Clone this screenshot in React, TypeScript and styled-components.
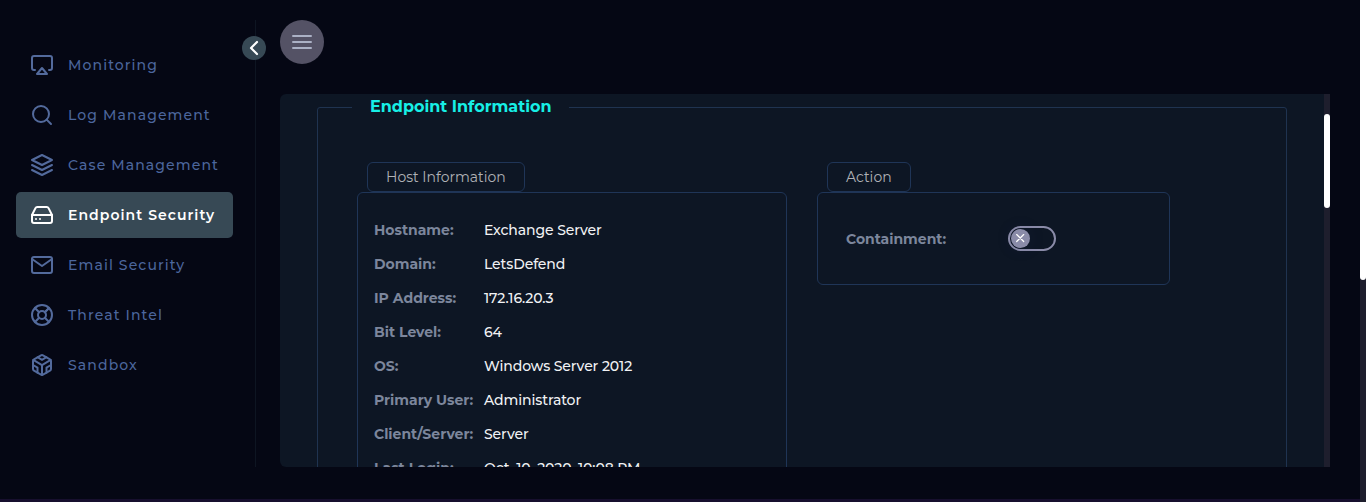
import React from "react";
import styled, { createGlobalStyle } from "styled-components";
import {
  FiAirplay,
  FiCodesandbox,
  FiHardDrive,
  FiLayers,
  FiLifeBuoy,
  FiMail,
  FiSearch,
} from "react-icons/fi";
import type { IconType } from "react-icons";

const GlobalStyle = createGlobalStyle`
  * { box-sizing: border-box; }
  body {
    margin: 0;
    background: #050714;
    font-family: Montserrat, Inter, sans-serif;
    font-size: 14px;
    overflow: hidden;
  }
`;

const Screen = styled.div`
  display: flex;
  height: 502px;
  background: #050714;
`;

const Page = styled.div`
  flex: 1;
  display: flex;
  flex-direction: column;
`;

const Content = styled.div`
  flex: 1;
  display: flex;
  padding: 20px 30px 32px 0;
`;

const BottomBar = styled.div`
  height: 3px;
  background: #170f2e;
`;

const ScrollTrack = styled.div<{ $offset?: number }>`
  flex: none;
  width: 6px;
  padding-top: ${(p) => p.$offset ?? 0}px;
  background: #1e1e2d;
`;

const ScrollThumb = styled.div<{ $height: number; $square?: boolean }>`
  height: ${(p) => p.$height}px;
  background: #fff;
  border-radius: ${(p) => (p.$square ? "0 0 3px 3px" : "3px")};
`;

const Sidebar = styled.aside`
  position: relative;
  width: 256px;
  padding: 22px 22px 0 16px;
  border-right: 1px solid #0e1522;
`;

const CollapseButton = styled.button`
  position: absolute;
  top: 16px;
  right: -11px;
  width: 24px;
  height: 24px;
  padding: 0;
  border: 0;
  border-radius: 50%;
  background: #374955;
  display: grid;
  place-items: center;
`;

const NavList = styled.nav`
  display: flex;
  flex-direction: column;
  gap: 4px;
`;

const NavItem = styled.a<{ $active?: boolean }>`
  display: flex;
  align-items: center;
  gap: 14px;
  height: 46px;
  padding-left: 14px;
  border-radius: 5px;
  letter-spacing: ${(p) => (p.$active ? "1.05px" : "1.12px")};
  white-space: nowrap;
  font-weight: ${(p) => (p.$active ? 600 : 500)};
  color: ${(p) => (p.$active ? "#fff" : "#4c669d")};
  background: ${(p) => (p.$active ? "#374955" : "transparent")};

  svg {
    flex: none;
    color: ${(p) => (p.$active ? "#fff" : "#536a9c")};
  }
`;

const Main = styled.main`
  flex: 1;
  display: flex;
  flex-direction: column;
  gap: 30px;
  padding-left: 24px;
`;

const MenuButton = styled.button`
  flex: none;
  width: 44px;
  height: 44px;
  padding: 0;
  border: 0;
  border-radius: 50%;
  background: #545265;
  display: flex;
  flex-direction: column;
  align-items: center;
  justify-content: center;
  gap: 4px;
`;

const MenuBar = styled.span`
  width: 20px;
  height: 2px;
  border-radius: 1px;
  background: #abb1c5;
`;

const Panel = styled.section`
  display: flex;
  height: 373px;
  overflow: hidden;
  border-radius: 6px 0 0 6px;
  background: #0d1624;
`;

const PanelBody = styled.div`
  flex: 1;
  padding: 1px 37px 0;
`;

const Group = styled.fieldset`
  height: 520px;
  margin: 0;
  padding: 43px 39px 0;
  border: 1px solid #1f3350;
  border-radius: 3px;
`;

const GroupTitle = styled.legend`
  width: 217px;
  margin-left: -5px;
  padding: 0 0 0 18px;
  font-size: 16px;
  line-height: 24px;
  font-weight: 700;
  color: #17efe6;
`;

const Cards = styled.div`
  display: flex;
  align-items: flex-start;
  gap: 30px;
`;

const CardColumn = styled.div<{ $width: number }>`
  width: ${(p) => p.$width}px;
`;

const CardTab = styled.h3`
  width: max-content;
  height: 30px;
  margin: 0 0 0 10px;
  padding: 0 18px;
  border: 1px solid #1f3557;
  border-radius: 6px;
  line-height: 28px;
  font-size: 14px;
  font-weight: 400;
  color: #b0b2b6;
`;

const Card = styled.div<{ $height: number }>`
  height: ${(p) => p.$height}px;
  border: 1px solid #1f3557;
  border-radius: 6px;
`;

const Details = styled.dl`
  display: grid;
  grid-template-columns: 110px 1fr;
  grid-auto-rows: 34px;
  align-items: center;
  margin: 0;
  padding: 20px 0 0 16px;
`;

const Term = styled.dt`
  font-weight: 700;
  color: #7c869c;
`;

const Value = styled.dd`
  margin: 0;
  font-weight: 500;
  letter-spacing: -0.1px;
  color: #f1f2f4;
`;

const ContainmentRow = styled.div`
  display: flex;
  align-items: center;
  height: 91px;
  padding-left: 28px;
`;

const ContainmentLabel = styled.span`
  width: 162px;
  font-weight: 700;
  color: #7c869c;
`;

const Toggle = styled.button`
  display: flex;
  align-items: center;
  width: 48px;
  height: 25px;
  padding: 0 0 0 1px;
  border: 2px solid #8a8ba8;
  border-radius: 13px;
  background: transparent;
`;

const Knob = styled.span`
  display: grid;
  place-items: center;
  width: 19px;
  height: 19px;
  border-radius: 50%;
  background: #8a8ba8;
  box-shadow: 0 0 18px rgba(60, 50, 130, 0.12);
`;

const navItems: { label: string; icon: IconType; active?: boolean }[] = [
  { label: "Monitoring", icon: FiAirplay },
  { label: "Log Management", icon: FiSearch },
  { label: "Case Management", icon: FiLayers },
  { label: "Endpoint Security", icon: FiHardDrive, active: true },
  { label: "Email Security", icon: FiMail },
  { label: "Threat Intel", icon: FiLifeBuoy },
  { label: "Sandbox", icon: FiCodesandbox },
];

const hostDetails: [string, string][] = [
  ["Hostname:", "Exchange Server"],
  ["Domain:", "LetsDefend"],
  ["IP Address:", "172.16.20.3"],
  ["Bit Level:", "64"],
  ["OS:", "Windows Server 2012"],
  ["Primary User:", "Administrator"],
  ["Client/Server:", "Server"],
  ["Last Login:", "Oct, 10, 2020, 10:08 PM"],
];

export default function App() {
  return (
    <Screen>
      <GlobalStyle />
      <Page>
        <Content>
          <Sidebar>
            <CollapseButton aria-label="Collapse sidebar">
              <svg width="24" height="24" viewBox="0 0 24 24" fill="none">
                <path d="M15 6L9 12L15 18" stroke="#fff" strokeWidth="2.2" strokeLinecap="round" strokeLinejoin="round" />
              </svg>
            </CollapseButton>
            <NavList>
              {navItems.map(({ label, icon: Icon, active }) => (
                <NavItem key={label} $active={active}>
                  <Icon size={24} />
                  {label}
                </NavItem>
              ))}
            </NavList>
          </Sidebar>
          <Main>
            <MenuButton aria-label="Menu">
              <MenuBar />
              <MenuBar />
              <MenuBar />
            </MenuButton>
            <Panel>
              <PanelBody>
                <Group>
                  <GroupTitle>Endpoint Information</GroupTitle>
                  <Cards>
                    <CardColumn $width={430}>
                      <CardTab>Host Information</CardTab>
                      <Card $height={340}>
                        <Details>
                          {hostDetails.map(([term, value]) => (
                            <React.Fragment key={term}>
                              <Term>{term}</Term>
                              <Value>{value}</Value>
                            </React.Fragment>
                          ))}
                        </Details>
                      </Card>
                    </CardColumn>
                    <CardColumn $width={353}>
                      <CardTab>Action</CardTab>
                      <Card $height={93}>
                        <ContainmentRow>
                          <ContainmentLabel>Containment:</ContainmentLabel>
                          <Toggle aria-label="Containment">
                            <Knob>
                              <svg width="9" height="9" viewBox="0 0 9 9" fill="none">
                                <path d="M0.7 0.5L7.7 7.5M7.7 0.5L0.7 7.5" stroke="#fff" strokeWidth="1.2" strokeLinecap="round" />
                              </svg>
                            </Knob>
                          </Toggle>
                        </ContainmentRow>
                      </Card>
                    </CardColumn>
                  </Cards>
                </Group>
              </PanelBody>
              <ScrollTrack $offset={20}>
                <ScrollThumb $height={94} />
              </ScrollTrack>
            </Panel>
          </Main>
        </Content>
        <BottomBar />
      </Page>
      <ScrollTrack>
        <ScrollThumb $height={280} $square />
      </ScrollTrack>
    </Screen>
  );
}
